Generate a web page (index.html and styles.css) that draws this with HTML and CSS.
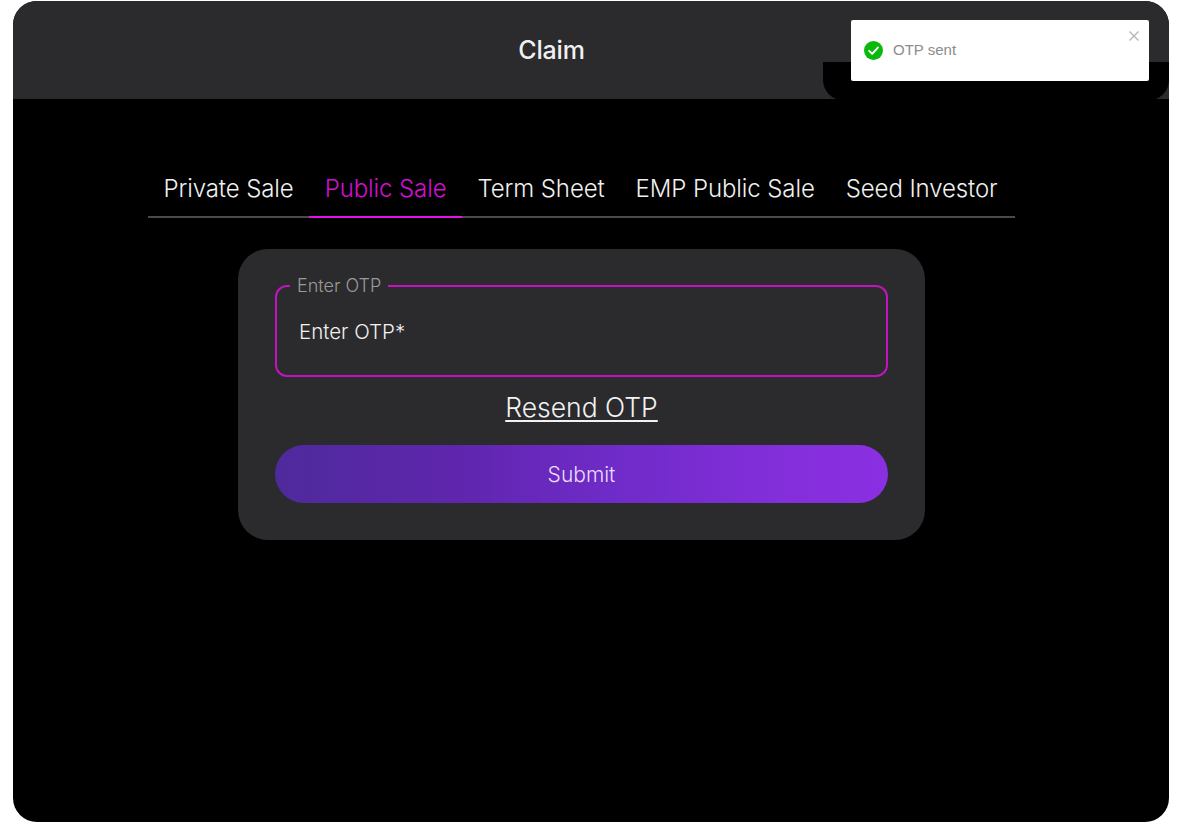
FILE: index.html
```html
<!DOCTYPE html>
<html lang="en">
<head>
  <meta charset="UTF-8">
  <title>Claim</title>
  <link rel="stylesheet" href="styles.css">
</head>
<body>

<div class="frame">
  <header class="topbar">
    <h1 class="title">Claim</h1>
  </header>
  <div class="topbar-notch"></div>

  <div class="toast">
    <svg class="toast-icon" viewBox="0 0 20 20" aria-hidden="true">
      <circle cx="10" cy="10" r="10" fill="#0cb80c"/>
      <path d="M5.4 10.4l3.2 3.1 6-6.6" fill="none" stroke="#fff" stroke-width="2" stroke-linecap="round" stroke-linejoin="round"/>
    </svg>
    <span class="toast-text">OTP sent</span>
    <svg class="toast-close" viewBox="0 0 10 10" aria-hidden="true">
      <path d="M0.5 0.5l9 9M9.5 0.5l-9 9" fill="none" stroke="#b5b5b5" stroke-width="1.3"/>
    </svg>
  </div>

  <main class="content">
    <nav class="tabs">
      <a class="tab">Private Sale</a>
      <a class="tab active">Public Sale</a>
      <a class="tab">Term Sheet</a>
      <a class="tab">EMP Public Sale</a>
      <a class="tab">Seed Investor</a>
    </nav>

    <form class="card">
      <fieldset class="otp-field">
        <legend>Enter OTP</legend>
        <div class="otp-input">Enter OTP*</div>
      </fieldset>
      <a class="resend">Resend OTP</a>
      <button type="button" class="submit">Submit</button>
    </form>
  </main>
</div>

</body>
</html>
```

FILE: styles.css
```css
* {
  box-sizing: border-box;
}

html,
body {
  height: 100%;
}

body {
  margin: 0;
  padding: 1px 12px 5px 13px;
  background: #fff;
  font-family: Inter, "Noto Sans", sans-serif;
  overflow: hidden;
}

.frame {
  position: relative;
  height: 821px;
  background: #000;
  border-radius: 24px;
  overflow: hidden;
}

.topbar {
  height: 98px;
  padding-right: 79px;
  background: #2b2a2d;
  display: flex;
  justify-content: center;
  align-items: center;
}

.title {
  margin: 0;
  font-size: 25px;
  font-weight: 500;
  letter-spacing: -0.2px;
  color: #f0f0f0;
}

.topbar-notch {
  position: absolute;
  top: 61px;
  right: 0;
  width: 346px;
  height: 38px;
  background: #000;
  border-radius: 0 0 20px 20px;
}

.toast {
  position: absolute;
  top: 19px;
  left: 838px;
  width: 298px;
  height: 61px;
  background: #fff;
  border-radius: 2px;
  display: flex;
  align-items: center;
  padding: 0 0 1px 13px;
  gap: 10px;
}

.toast-icon {
  width: 19px;
  height: 19px;
}

.toast-text {
  margin-bottom: 2px;
  font-family: "Liberation Sans", Arial, sans-serif;
  font-size: 15px;
  color: #8c8c8c;
}

.toast-close {
  position: absolute;
  top: 11px;
  right: 10px;
  width: 10px;
  height: 10px;
}

.content {
  display: flex;
  flex-direction: column;
  align-items: center;
  padding-right: 19px;
}

.tabs {
  display: flex;
  width: 867px;
  height: 54px;
  margin-top: 65px;
  border-bottom: 2px solid #4a4a4a;
}

.tab {
  height: 54px;
  padding: 10px 15.5px 0;
  font-size: 24px;
  font-weight: 300;
  line-height: 30px;
  letter-spacing: -0.1px;
  color: #f0f0f0;
  white-space: nowrap;
}

.tab.active {
  color: #d40fd4;
  border-bottom: 2px solid #e90fe9;
}

.card {
  width: 687px;
  height: 291px;
  margin-top: 31px;
  padding: 27px 37px 37px;
  background: #2b2a2d;
  border-radius: 30px;
  display: flex;
  flex-direction: column;
}

.otp-field {
  margin: 0;
  padding: 0 22px;
  height: 101px;
  border: 2px solid #c014c0;
  border-radius: 12px;
}

.otp-field legend {
  padding: 0 7px;
  margin-left: -9px;
  font-size: 18px;
  font-weight: 300;
  line-height: 20px;
  color: #9a9a9a;
}

.otp-input {
  margin-top: 22px;
  font-size: 20.5px;
  font-weight: 300;
  line-height: 28px;
  color: #f2f2f2;
}

.resend {
  margin-top: 13px;
  align-self: center;
  font-size: 26.5px;
  font-weight: 300;
  line-height: 34px;
  color: #f2f2f2;
  text-decoration: underline;
  text-underline-offset: 3px;
  text-decoration-thickness: 1.5px;
}

.submit {
  margin-top: 21px;
  height: 58px;
  border: none;
  border-radius: 29px;
  background: linear-gradient(90deg, #4e2a9c 0%, #5f26ad 30%, #6f2bc8 55%, #852fdc 85%, #8a2fe2 100%);
  font-family: inherit;
  font-size: 21px;
  font-weight: 300;
  color: #ecdcfb;
}
```
